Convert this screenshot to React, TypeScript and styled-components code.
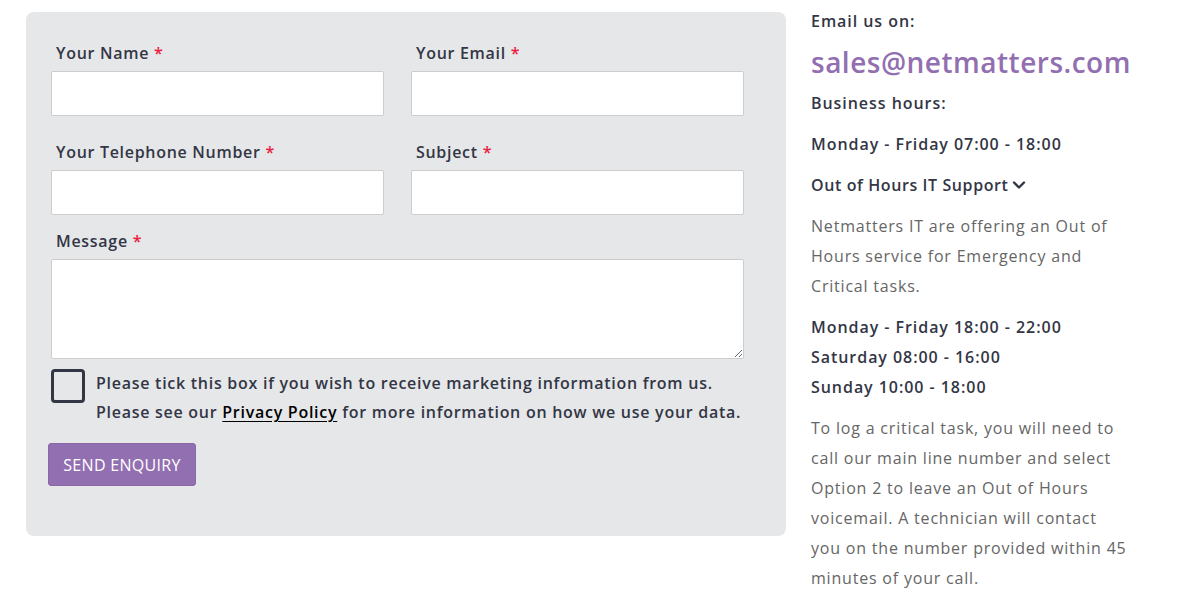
import React from "react";
import styled, { createGlobalStyle } from "styled-components";

const Global = createGlobalStyle`
  html, body { margin: 0; padding: 0; background: #ffffff; }
  body { font-family: "Open Sans", "Liberation Sans", sans-serif; color: #333645; }
  * { box-sizing: border-box; }
`;

const Page = styled.div`
  display: flex;
  align-items: flex-start;
  gap: 25px;
  padding-left: 26px;
  width: 1177px;
  height: 611px;
  overflow: hidden;
`;

const FormCard = styled.form`
  margin-top: 12px;
  width: 760px;
  height: 524px;
  background: #e6e7e9;
  border-radius: 8px;
  padding: 30px 42px 0 25px;
  display: flex;
  flex-direction: column;
`;

const Row = styled.div<{ $gapAfter: number }>`
  display: grid;
  grid-template-columns: 333px 333px;
  column-gap: 27px;
  margin-bottom: ${(p) => p.$gapAfter}px;
`;

const Field = styled.div`
  display: flex;
  flex-direction: column;
`;

const Label = styled.label`
  padding-left: 5px;
  font-size: 16px;
  font-weight: 600;
  line-height: 22px;
  letter-spacing: 0.7px;
  color: #333645;
  margin-bottom: 7px;
`;

const Req = styled.span`
  color: #e9203d;
`;

const Input = styled.input`
  width: 100%;
  height: 45px;
  background: #ffffff;
  border: 1px solid #cdcdcd;
  border-radius: 2px;
  outline: none;
`;

const TextArea = styled.textarea`
  width: 693px;
  height: 100px;
  background: #ffffff;
  border: 1px solid #cdcdcd;
  border-radius: 2px;
  outline: none;
  display: block;
  font-family: inherit;
`;

const ConsentRow = styled.div`
  display: flex;
  align-items: flex-start;
  gap: 11px;
  margin-top: 10px;
`;

const Box = styled.span`
  flex: 0 0 auto;
  width: 34px;
  height: 34px;
  border: 3px solid #333645;
  border-radius: 4px;
  background: transparent;
`;

const ConsentText = styled.p`
  margin: 0;
  font-size: 16px;
  font-weight: 600;
  line-height: 29px;
  letter-spacing: 0.73px;
  color: #333645;
`;

const PolicyLink = styled.a`
  color: #000000;
  text-decoration: underline;
  text-underline-offset: 3px;
`;

const SendButton = styled.button`
  margin-top: 16px;
  margin-left: -3px;
  width: 148px;
  height: 43px;
  background: #926fb1;
  border: 1px solid #8a68a8;
  border-radius: 3px;
  color: #ffffff;
  font-family: inherit;
  font-size: 16px;
  font-weight: 400;
  letter-spacing: 0.3px;
  padding: 0;
`;

const Side = styled.aside`
  padding-top: 6px;
  display: flex;
  flex-direction: column;
  width: 360px;
`;

const Line = styled.p<{ $muted?: boolean }>`
  margin: 0 0 11px;
  font-size: 16px;
  line-height: 30px;
  letter-spacing: ${(p) => (p.$muted ? "0.8px" : "0.95px")};
  font-weight: ${(p) => (p.$muted ? 400 : 600)};
  color: ${(p) => (p.$muted ? "#666666" : "#333645")};
  white-space: nowrap;
`;

const Email = styled.a`
  margin: 0 0 11px;
  font-size: 28px;
  line-height: 30px;
  font-weight: 600;
  letter-spacing: 0.5px;
  color: #926fb1;
  text-decoration: none;
`;

const Toggle = styled.span`
  display: inline-flex;
  align-items: center;
  gap: 3px;
  letter-spacing: 0.6px;
`;

const Chevron = () => (
  <svg width="14" height="14" viewBox="0 0 14 14" fill="none">
    <path d="M2 4.5 L7 9.5 L12 4.5" stroke="#333645" strokeWidth="2.4" strokeLinecap="round" strokeLinejoin="round" />
  </svg>
);

export default function App() {
  return (
    <>
      <Global />
      <Page>
        <FormCard onSubmit={(e) => e.preventDefault()}>
          <Row $gapAfter={25}>
            <Field>
              <Label>Your Name <Req>*</Req></Label>
              <Input type="text" />
            </Field>
            <Field>
              <Label>Your Email <Req>*</Req></Label>
              <Input type="email" />
            </Field>
          </Row>
          <Row $gapAfter={15}>
            <Field>
              <Label>Your Telephone Number <Req>*</Req></Label>
              <Input type="tel" />
            </Field>
            <Field>
              <Label>Subject <Req>*</Req></Label>
              <Input type="text" />
            </Field>
          </Row>
          <Field>
            <Label>Message <Req>*</Req></Label>
            <TextArea />
          </Field>
          <ConsentRow>
            <Box />
            <ConsentText>
              Please tick this box if you wish to receive marketing information from us.
              <br />
              Please see our <PolicyLink href="#">Privacy Policy</PolicyLink> for more information on how we use your data.
            </ConsentText>
          </ConsentRow>
          <div>
            <SendButton type="submit">SEND ENQUIRY</SendButton>
          </div>
        </FormCard>
        <Side>
          <Line>Email us on:</Line>
          <Email href="#">sales@netmatters.com</Email>
          <Line>Business hours:</Line>
          <Line>Monday - Friday 07:00 - 18:00</Line>
          <Line>
            <Toggle>Out of Hours IT Support <Chevron /></Toggle>
          </Line>
          <Line $muted>
            Netmatters IT are offering an Out of
            <br />
            Hours service for Emergency and
            <br />
            Critical tasks.
          </Line>
          <Line>
            Monday - Friday 18:00 - 22:00
            <br />
            Saturday 08:00 - 16:00
            <br />
            Sunday 10:00 - 18:00
          </Line>
          <Line $muted>
            To log a critical task, you will need to
            <br />
            call our main line number and select
            <br />
            Option 2 to leave an Out of Hours
            <br />
            voicemail. A technician will contact
            <br />
            you on the number provided within 45
            <br />
            minutes of your call.
          </Line>
        </Side>
      </Page>
    </>
  );
}
